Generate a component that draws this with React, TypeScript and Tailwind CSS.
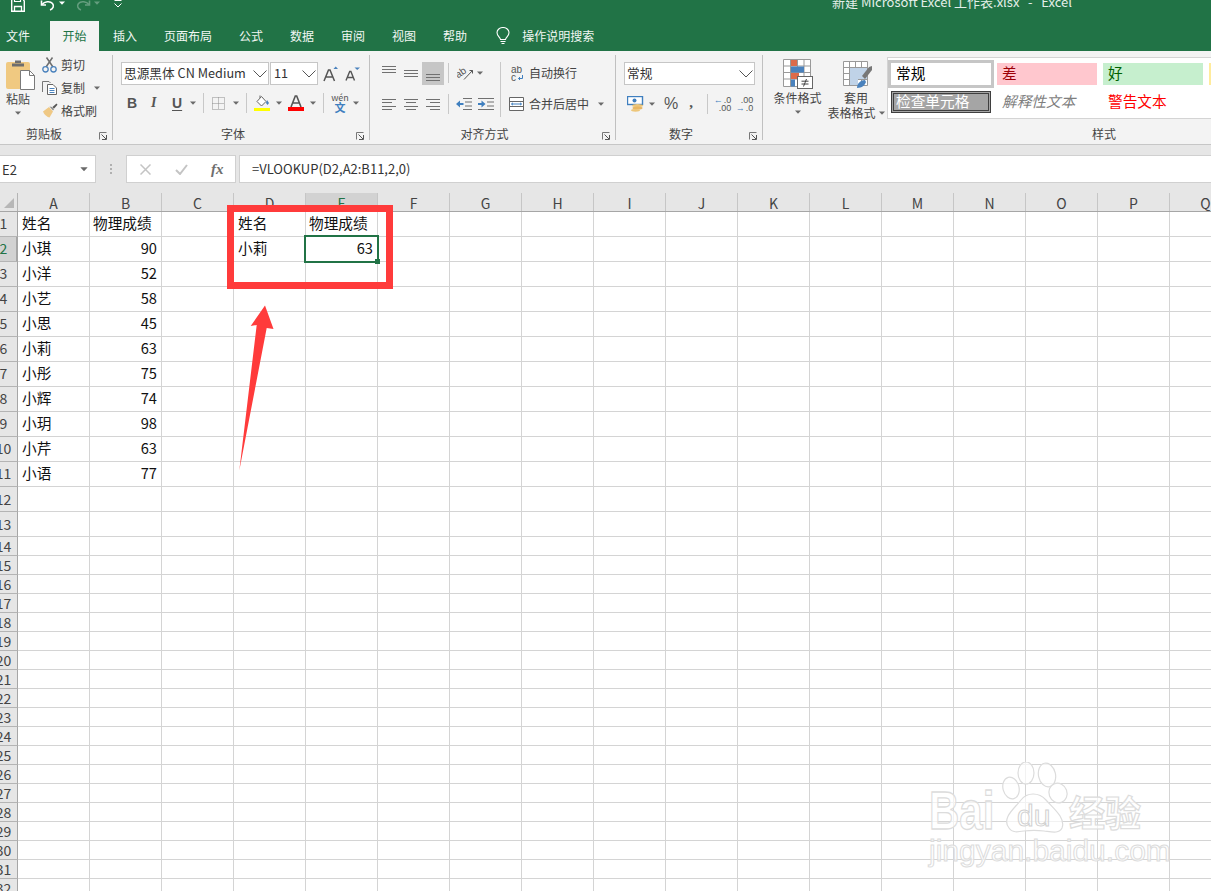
import React from "react";

type SP = { w: number; h: number; className?: string; children?: React.ReactNode };
const Svg = ({ w, h, className = "", children }: SP) => (
  <svg width={w} height={h} viewBox={`0 0 ${w} ${h}`} fill="none" className={`block shrink-0 ${className}`}>
    {children}
  </svg>
);

const Caret = ({ className = "" }: { className?: string }) => (
  <Svg w={6} h={4} className={className}>
    <path d="M0 0.5h6L3 3.8z" fill="#6a6a6a" />
  </Svg>
);

const Chevron = () => (
  <Svg w={14} h={8}>
    <path d="M0.5 0.5L7 7l6.5-6.5" stroke="#555" strokeWidth="1" />
  </Svg>
);

const Launcher = () => (
  <Svg w={8} h={8}>
    <path d="M0.5 7.5V0.5H7.5" stroke="#777" />
    <path d="M7.5 3v4.5H3M2.5 2.5L7 7" stroke="#555" />
  </Svg>
);

const Lines = ({ w, rows }: { w: number; rows: [number, number, number][] }) => {
  const h = Math.max(...rows.map((r) => r[2])) + 1;
  return (
    <Svg w={w} h={h}>
      {rows.map((r, i) => (
        <path key={i} d={`M${r[0]} ${r[2] + 0.5}H${r[1]}`} stroke="#707070" />
      ))}
    </Svg>
  );
};

const Sep = ({ className = "" }: { className?: string }) => <div className={`w-px bg-[#c8c8c8] shrink-0 ${className}`} />;

const GroupSep = () => <div className="w-px h-[85px] mt-[4px] bg-[#c0c0c0] shrink-0" />;

const GroupLabel = ({ label, inset = "" }: { label: string; inset?: string }) => (
  <div className="flex items-center h-[16px]">
    <div className={`flex-1 text-center text-[12px] leading-[16px] text-[#444] ${inset}`}>{label}</div>
    <div className="w-[16px] pl-[3px] pt-[3px]">
      <Launcher />
    </div>
  </div>
);

const SmallItem = ({ icon, text, caret }: { icon: React.ReactNode; text: string; caret?: boolean }) => (
  <div className="flex items-center h-[23px]">
    <div className="w-[19px] flex justify-start">{icon}</div>
    <span className="text-[12px] text-[#444] leading-[16px]">{text}</span>
    {caret && <Caret className="ml-[9px]" />}
  </div>
);

const Select = ({ text, className }: { text: string; className: string }) => (
  <div className={`h-[23px] bg-white border border-[#c6c6c6] flex items-center justify-between pl-[2px] pr-[1px] ${className}`}>
    <span className="text-[12.7px] leading-[16px] text-[#333] whitespace-nowrap pb-[2px]">{text}</span>
    <Chevron />
  </div>
);

const cols = ["A", "B", "C", "D", "E", "F", "G", "H", "I", "J", "K", "L", "M", "N", "O", "P", "Q"];
const names = ["姓名", "小琪", "小洋", "小艺", "小思", "小莉", "小彤", "小辉", "小玥", "小芹", "小语"];
const scores = ["物理成绩", "90", "52", "58", "45", "63", "75", "74", "98", "63", "77"];
const rowNums = Array.from({ length: 33 }, (_, i) => i + 1);

const Cell = ({ text, right, selected }: { text?: string; right?: boolean; selected?: boolean }) => (
  <div
    className={`relative w-[72px] shrink-0 border-r border-b border-[#d4d4d4] h-full flex items-center pb-[2px] pr-[4px] text-[14.67px] text-[#111] whitespace-nowrap ${
      right ? "justify-end" : ""
    } ${text === "物理成绩" ? "pl-[3px]" : "pl-[4px]"} ${selected ? "z-10" : ""}`}
  >
    {text}
    {selected && (
      <>
        <div className="absolute -left-[2px] -top-[2px] w-[75px] h-[28px] border-2 border-[#217346]" />
        <div className="absolute left-[69px] top-[22px] w-[5px] h-[5px] bg-[#217346]" />
      </>
    )}
  </div>
);

export default function App() {
  return (
    <div className="relative w-[1211px] h-[891px] overflow-hidden bg-white font-['Noto_Sans_CJK_SC','Noto_Sans',sans-serif]">
      {/* Title bar */}
      <div className="h-[51px] bg-[#217346] text-white">
        <div className="h-[21px] flex items-start overflow-hidden">
          <Svg w={14} h={12} className="ml-[11px]">
            <path d="M0.7 0V11.3H13.3V1L12.3 0" stroke="#fff" strokeWidth="1.4" />
            <path d="M3.5 11V6.5h7V11" stroke="#fff" strokeWidth="1.3" />
            <path d="M3.5 0v1.5h6V0" stroke="#fff" strokeWidth="1.2" />
          </Svg>
          <Svg w={15} h={11} className="ml-[15px]">
            <path d="M1.5 0.5V5h4.5" stroke="#fff" strokeWidth="1.6" />
            <path d="M2 4.5C4.5 1.5 10 0.5 12.5 3.5c2 2.5 0.5 5.5-2.5 6.5" stroke="#fff" strokeWidth="1.6" />
          </Svg>
          <Svg w={6} h={4} className="ml-[4px] mt-[1px]">
            <path d="M0 0.5h6L3 3.8z" fill="#fff" />
          </Svg>
          <Svg w={15} h={11} className="ml-[11px] opacity-30">
            <path d="M13.5 0.5V5H9" stroke="#fff" strokeWidth="1.6" />
            <path d="M13 4.5C10.5 1.5 5 0.5 2.5 3.5c-2 2.5-0.5 5.5 2.5 6.5" stroke="#fff" strokeWidth="1.6" />
          </Svg>
          <Svg w={6} h={4} className="ml-[3px] mt-[1px] opacity-30">
            <path d="M0 0.5h6L3 3.8z" fill="#fff" />
          </Svg>
          <Svg w={8} h={8} className="ml-[14px]">
            <path d="M0.5 0.5h7" stroke="#fff" />
            <path d="M0.5 3.5L4 7l3.5-3.5" stroke="#fff" />
          </Svg>
          <div className="ml-[710px] -mt-[6px] text-[13px] leading-[16px] text-[#e4efe9] whitespace-pre">
            新建 Microsoft Excel 工作表.xlsx   -   Excel
          </div>
        </div>
        <div className="h-[30px] flex items-center text-[12px] leading-[16px] text-[#f2f7f4]">
          <span className="ml-[6px]">文件</span>
          <div className="ml-[20px] w-[49px] h-full bg-[#f3f3f3] text-[#217346] flex items-center justify-center">开始</div>
          <span className="ml-[14px]">插入</span>
          <span className="ml-[27px]">页面布局</span>
          <span className="ml-[27px]">公式</span>
          <span className="ml-[27px]">数据</span>
          <span className="ml-[27px]">审阅</span>
          <span className="ml-[27px]">视图</span>
          <span className="ml-[27px]">帮助</span>
          <Svg w={14} h={18} className="ml-[29px]">
            <path d="M4.5 12.5C4 10 1 9 1 5.5a6 5 0 0 1 12 0C13 9 10 10 9.5 12.5z" stroke="#fff" strokeWidth="1.1" />
            <path d="M4.5 14.5h5M5.5 16.5h3" stroke="#fff" />
          </Svg>
          <span className="ml-[12px]">操作说明搜索</span>
        </div>
      </div>

      {/* Ribbon */}
      <div className="h-[94px] bg-[#f3f3f3] border-b border-[#c6c6c6] flex">
        {/* Clipboard */}
        <div className="w-[112px] shrink-0 flex flex-col">
          <div className="h-[75px] flex">
            <div className="w-[42px] shrink-0 flex flex-col items-center pr-[6px] pt-[8px]">
              <Svg w={29} h={31} className="ml-[5px]">
                <rect x="0" y="3" width="24" height="27" rx="2" fill="#f0c981" />
                <path d="M6 4.5h12V7.5H6zM9 4V1.5h6V4" fill="#6e6e6e" />
                <path d="M14.5 11.5h9l5 5v14h-14z" fill="#fff" stroke="#7a7a7a" />
                <path d="M23.5 11.5v5h5" stroke="#7a7a7a" />
              </Svg>
              <span className="text-[12px] leading-[15px] text-[#444] mt-[1px]">粘贴</span>
              <Caret className="mt-[5px]" />
            </div>
            <div className="pt-[2px]">
              <SmallItem
                text="剪切"
                icon={
                  <Svg w={15} h={16}>
                    <path d="M4 10L10.5 0.5M11 10L4.5 0.5" stroke="#6e6e6e" strokeWidth="1.5" />
                    <circle cx="3.5" cy="12.3" r="2.7" stroke="#4a82bd" strokeWidth="1.3" />
                    <circle cx="11.5" cy="12.3" r="2.7" stroke="#4a82bd" strokeWidth="1.3" />
                  </Svg>
                }
              />
              <SmallItem
                text="复制"
                caret
                icon={
                  <Svg w={15} h={14}>
                    <path d="M0.5 11V0.5H7L8.5 2" stroke="#777" />
                    <path d="M5.5 3.5H11L14.5 7V13.5H5.5z" fill="#fff" stroke="#666" />
                    <path d="M7.5 7.5h5M7.5 9.5h5M7.5 11.5h5" stroke="#4a82bd" />
                  </Svg>
                }
              />
              <SmallItem
                text="格式刷"
                icon={
                  <Svg w={16} h={15}>
                    <path d="M1 8.5L7 4l4 4.5-3.5 6c-2-.2-5.5-3-6.5-6z" fill="#efc884" />
                    <path d="M7.5 3.5l3.5 4 1-1L10 4z" fill="#8a8a8a" />
                    <path d="M10.5 4L14.5 0.5l1 1.2-3.6 4z" fill="#555" />
                  </Svg>
                }
              />
            </div>
          </div>
          <GroupLabel label="剪贴板" inset="pr-[8px]" />
        </div>
        <GroupSep />

        {/* Font */}
        <div className="w-[256px] shrink-0 flex flex-col">
          <div className="h-[75px] pt-[11px]">
            <div className="flex items-center h-[23px]">
              <Select text="思源黑体 CN Medium" className="ml-[8px] w-[148px]" />
              <Select text="11" className="ml-[1px] w-[48px] !pl-[3px]" />
              <Svg w={15} h={16} className="ml-[5px]">
                <path d="M1 15L5.5 4h1.5L11.5 15M3 11h7" stroke="#555" strokeWidth="1.5" />
                <path d="M10.5 3L12.7 0.5 15 3z" fill="#4a82bd" />
              </Svg>
              <Svg w={15} h={14} className="ml-[7px]">
                <path d="M1 13.5L4.7 4.5h1.2L9.5 13.5M2.8 10.5h6" stroke="#555" strokeWidth="1.4" />
                <path d="M9.5 0.5h5.5L12.2 3z" fill="#4a82bd" />
              </Svg>
            </div>
            <div className="flex items-center h-[22px] mt-[7px]">
              <span className="ml-[14px] w-[9px] text-[14px] font-bold text-[#555] leading-none font-['Liberation_Sans',sans-serif]">B</span>
              <span className="ml-[15px] w-[6px] text-[14px] italic text-[#555] font-bold leading-none font-['Liberation_Serif',serif]">I</span>
              <span className="ml-[15px] w-[9px] text-[14px] font-bold text-[#555] leading-none underline underline-offset-2 font-['Liberation_Sans',sans-serif]">U</span>
              <Caret className="ml-[9px]" />
              <Sep className="ml-[7px] h-[20px]" />
              <Svg w={13} h={13} className="ml-[8px]">
                <path d="M0.5 0.5H12.5V12.5H0.5zM6.5 0.5V12.5M0.5 6.5H12.5" stroke="#8c8c8c" strokeDasharray="1 1" />
              </Svg>
              <Caret className="ml-[8px]" />
              <Sep className="ml-[7px] h-[20px]" />
              <div className="ml-[7px] w-[16px] flex flex-col items-center">
                <Svg w={16} h={12}>
                  <path d="M3 6.5L7.5 1.5l4.5 5-4.5 4.5z" stroke="#666" fill="#fff" />
                  <path d="M6 3V0.5" stroke="#666" />
                  <path d="M13 5l2 3-1.5 2-1.5-2z" fill="#4a82bd" />
                </Svg>
                <div className="w-[16px] h-[3px] bg-[#ffff00] mt-[1px]" />
              </div>
              <Caret className="ml-[6px]" />
              <div className="ml-[6px] w-[16px] flex flex-col items-center">
                <Svg w={12} h={12}>
                  <path d="M1 12L5.3 1h1.4L11 12M2.8 8h6.4" stroke="#555" strokeWidth="1.6" />
                </Svg>
                <div className="w-[16px] h-[4px] bg-[#ff0000]" />
              </div>
              <Caret className="ml-[6px]" />
              <Sep className="ml-[7px] h-[20px]" />
              <div className="ml-[8px] w-[16px] flex flex-col items-center leading-none">
                <span className="text-[9px] leading-[9px] text-[#555] whitespace-nowrap">wén</span>
                <span className="text-[11px] leading-[11px] font-bold text-[#3f7fbf]">文</span>
              </div>
              <Caret className="ml-[5px]" />
            </div>
          </div>
          <GroupLabel label="字体" />
        </div>
        <GroupSep />

        {/* Alignment */}
        <div className="w-[245px] shrink-0 flex flex-col">
          <div className="h-[75px] flex pt-[10px]">
            <div className="w-[130px] shrink-0">
              <div className="flex items-center h-[24px]">
                <div className="ml-[12px] -mt-[7px]">
                  <Lines w={14} rows={[[0, 14, 0], [0, 14, 3], [0, 14, 6]]} />
                </div>
                <div className="ml-[8px] mt-[1px]">
                  <Lines w={14} rows={[[0, 14, 0], [0, 14, 3], [0, 14, 6]]} />
                </div>
                <div className="ml-[4px] w-[22px] h-[23px] bg-[#c6c6c6] flex justify-center items-end pb-[4px]">
                  <Lines w={14} rows={[[0, 14, 0], [0, 14, 3], [0, 14, 6]]} />
                </div>
                <Sep className="ml-[4px] h-[20px]" />
                <Svg w={16} h={14} className="ml-[8px]">
                  <text x="-1" y="10" fontSize="10" fontFamily="Liberation Sans" fill="#555" transform="rotate(-35 4 8)">ab</text>
                  <path d="M7 13.5L15.5 4.5M12.5 4.5H15.5V7.5" stroke="#555" />
                </Svg>
                <Caret className="ml-[4px]" />
              </div>
              <div className="flex items-center h-[22px] mt-[8px]">
                <div className="ml-[12px]">
                  <Lines w={14} rows={[[0, 14, 0], [0, 10, 3], [0, 14, 7], [0, 10, 10]]} />
                </div>
                <div className="ml-[8px]">
                  <Lines w={14} rows={[[0, 14, 0], [2, 12, 3], [0, 14, 7], [2, 12, 10]]} />
                </div>
                <div className="ml-[8px]">
                  <Lines w={14} rows={[[0, 14, 0], [4, 14, 3], [0, 14, 7], [4, 14, 10]]} />
                </div>
                <Sep className="ml-[8px] h-[20px]" />
                <Svg w={16} h={12} className="ml-[7px]">
                  <path d="M7 0.5H16M9 4H16M9 8H16M7 11.5H16" stroke="#707070" />
                  <path d="M0 6L4 2.5V5H7.5V7H4V9.5z" fill="#3f7fbf" />
                </Svg>
                <Svg w={16} h={12} className="ml-[6px]">
                  <path d="M0 0.5H16M9 4H16M9 8H16M0 11.5H16" stroke="#707070" />
                  <path d="M7.5 6L3.5 2.5V5H0V7H3.5V9.5z" fill="#3f7fbf" />
                </Svg>
              </div>
            </div>
            <Sep className="mt-[1px] h-[55px]" />
            <div className="pl-[9px]">
              <div className="flex items-center h-[24px]">
                <Svg w={14} h={15}>
                  <text x="1" y="7" fontSize="10" fontFamily="Liberation Sans" fill="#555">ab</text>
                  <text x="1" y="14.5" fontSize="10" fontFamily="Liberation Sans" fill="#555">c</text>
                  <path d="M12.5 9v3.5H8.5M10 11l-1.5 1.5L10 14" stroke="#3f7fbf" />
                </Svg>
                <span className="ml-[5px] text-[12px] leading-[16px] text-[#444]">自动换行</span>
              </div>
              <div className="flex items-center h-[22px] mt-[8px] -ml-[1px]">
                <Svg w={15} h={14}>
                  <path d="M0.5 0.5H14.5V13.5H0.5zM0.5 4.5H14.5M0.5 9.5H14.5" stroke="#666" fill="#fff" />
                  <rect x="1" y="5" width="13" height="4" fill="#fff" />
                  <path d="M2.5 7h10M2.5 7l1.5-1.2M2.5 7l1.5 1.2M12.5 7L11 5.8M12.5 7L11 8.2" stroke="#3f7fbf" />
                </Svg>
                <span className="ml-[5px] text-[12px] leading-[16px] text-[#444]">合并后居中</span>
                <Caret className="ml-[9px]" />
              </div>
            </div>
          </div>
          <GroupLabel label="对齐方式" />
        </div>
        <GroupSep />

        {/* Number */}
        <div className="w-[146px] shrink-0 flex flex-col">
          <div className="h-[75px] pt-[11px]">
            <Select text="常规" className="ml-[8px] w-[131px]" />
            <div className="flex items-center h-[22px] mt-[8px]">
              <Svg w={17} h={16} className="ml-[11px]">
                <rect x="0.5" y="0.5" width="15" height="8" fill="#fff" stroke="#3f7fbf" strokeWidth="1.4" />
                <circle cx="7.5" cy="4.5" r="2" fill="#3f7fbf" />
                <ellipse cx="10.5" cy="9.5" rx="5.5" ry="1.6" fill="#edc67a" />
                <ellipse cx="10.5" cy="12" rx="5" ry="1.5" fill="#e8b765" />
                <ellipse cx="8.5" cy="14.3" rx="4.5" ry="1.4" fill="#edc67a" />
              </Svg>
              <Caret className="ml-[5px]" />
              <span className="ml-[9px] text-[16px] leading-none text-[#555] font-['Liberation_Sans',sans-serif]">%</span>
              <span className="ml-[11px] w-[5px] text-[15px] font-bold leading-none text-[#555] -mt-[4px] font-['Liberation_Serif',serif]">,</span>
              <Sep className="ml-[13px] h-[20px]" />
              <div className="ml-[7px] w-[16px] text-[9px] leading-[8px] text-[#555] font-['Liberation_Sans',sans-serif]">
                <div className="flex justify-end items-center">
                  <span className="text-[#3f7fbf] text-[9px] mr-[1px]">←</span>.0
                </div>
                <div className="text-right">.00</div>
              </div>
              <div className="ml-[6px] w-[16px] text-[9px] leading-[8px] text-[#555] font-['Liberation_Sans',sans-serif]">
                <div className="text-right">.00</div>
                <div className="flex justify-end items-center">
                  <span className="text-[#3f7fbf] text-[9px] mr-[1px]">→</span>.0
                </div>
              </div>
            </div>
          </div>
          <GroupLabel label="数字" />
        </div>
        <GroupSep />

        {/* Styles */}
        <div className="flex-1 min-w-0 flex flex-col">
          <div className="h-[75px] flex">
            <div className="w-[124px] shrink-0 flex">
              <div className="w-[68px] shrink-0 flex flex-col items-center pt-[8px] pl-[1px]">
                <Svg w={30} h={30}>
                  <path d="M0.5 0.5H27.5V27.5H0.5zM0.5 7H27.5M0.5 13.5H27.5M0.5 20H27.5M7.5 0.5V27.5M14.5 0.5V27.5M21 0.5V27.5" stroke="#999" fill="#fff" />
                  <rect x="8" y="1" width="6" height="6" fill="#dd6b4a" />
                  <rect x="8" y="7.5" width="13" height="6" fill="#4a82bd" />
                  <rect x="8" y="14" width="8" height="6" fill="#dd6b4a" />
                  <rect x="8" y="20.5" width="4" height="7" fill="#4a82bd" />
                  <rect x="14.5" y="17.5" width="15" height="12" fill="#fff" stroke="#666" />
                  <path d="M18.5 22.2h7M18.5 25h7M23.5 20l-3 7.5" stroke="#444" />
                </Svg>
                <span className="text-[12px] leading-[15px] text-[#444] mt-[1px] whitespace-nowrap">条件格式</span>
                <Caret className="mt-[5px]" />
              </div>
              <div className="w-[56px] shrink-0 flex flex-col items-center pt-[10px] -ml-[3px]">
                <Svg w={29} h={28} className="ml-[2px]">
                  <path d="M0.5 0.5H24.5V24.5H0.5zM0.5 6.5H24.5M0.5 12.5H24.5M0.5 18.5H24.5M6.5 0.5V24.5M12.5 0.5V24.5M18.5 0.5V24.5" stroke="#999" fill="#fff" />
                  <rect x="7" y="7" width="17" height="11" fill="#c0d3e8" />
                  <rect x="7" y="18" width="8" height="6" fill="#c0d3e8" />
                  <path d="M19 15l7-9 3-1v4l-7 9z" fill="#777" />
                  <path d="M14 27c0-5 4-8 8-8l1 2c-1 3-4 6-9 6z" fill="#4a82bd" />
                </Svg>
                <span className="text-[12px] leading-[15px] text-[#444] mt-[1px] whitespace-nowrap">套用</span>
                <div className="flex items-center whitespace-nowrap">
                  <span className="text-[12px] leading-[15px] text-[#444]">表格格式</span>
                  <Caret className="ml-[3px]" />
                </div>
              </div>
            </div>
            <div className="flex-1 min-w-0 mt-[6px] h-[62px] bg-white border border-r-0 border-[#d4d4d4] pt-[5px] pl-[3px] overflow-hidden">
              <div className="grid grid-cols-[100px_100px_100px_100px] gap-x-[6px] gap-y-[6px] auto-rows-[22px] text-[14.67px] leading-[19px] whitespace-nowrap">
                <div className="bg-white text-black pl-[5px] shadow-[0_0_0_3px_#c6c6c6]">常规</div>
                <div className="bg-[#ffc7ce] text-[#9c0006] pl-[5px]">差</div>
                <div className="bg-[#c6efce] text-[#006100] pl-[5px]">好</div>
                <div className="bg-[#ffeb9c] text-[#9c5700] pl-[5px]">适中</div>
                <div className="bg-[#a5a5a5] text-white pl-[2px] border-[3px] border-double border-[#3f3f3f] leading-[14px]">检查单元格</div>
                <div className="italic text-[#7f7f7f] pl-[5px]">解释性文本</div>
                <div className="text-[#ff0000] pl-[5px]">警告文本</div>
                <div className="text-[#fa7d00] pl-[5px] underline">链接单元格</div>
              </div>
            </div>
          </div>
          <div className="text-center text-[12px] leading-[16px] text-[#444] pl-[236px] pr-[2px]">样式</div>
        </div>
      </div>

      {/* Formula bar */}
      <div className="h-[48px] bg-[#e6e6e6] flex items-start pt-[10px]">
        <div className="w-[96px] h-[28px] bg-white border border-[#d0d0d0] border-l-0 flex items-center justify-between pl-[2px] pr-[8px] shrink-0">
          <span className="text-[13px] text-[#333] leading-none">E2</span>
          <Caret className="scale-125" />
        </div>
        <div className="w-[30px] h-[28px] flex flex-col items-center justify-center gap-[2px] shrink-0">
          <div className="w-[2px] h-[2px] bg-[#b0b0b0]" />
          <div className="w-[2px] h-[2px] bg-[#b0b0b0]" />
          <div className="w-[2px] h-[2px] bg-[#b0b0b0]" />
        </div>
        <div className="w-[110px] h-[28px] bg-white border border-[#d0d0d0] flex items-center shrink-0">
          <Svg w={11} h={11} className="ml-[13px]">
            <path d="M0.5 0.5L10.5 10.5M10.5 0.5L0.5 10.5" stroke="#c4c4c4" strokeWidth="1.5" />
          </Svg>
          <Svg w={13} h={11} className="ml-[24px]">
            <path d="M1 6L5 10L12 1" stroke="#c4c4c4" strokeWidth="2" />
          </Svg>
          <span className="ml-[23px] italic font-bold text-[15px] text-[#6e6e6e] font-['Liberation_Serif',serif] leading-none">fx</span>
        </div>
        <div className="ml-[3px] flex-1 h-[28px] bg-white border border-r-0 border-[#d0d0d0] flex items-center pl-[12px] text-[13px] text-[#333] whitespace-nowrap">
          =VLOOKUP(D2,A2:B11,2,0)
        </div>
      </div>

      {/* Sheet */}
      <div className="flex h-[19px] bg-[#e6e6e6] border-b border-[#a6a6a6] overflow-hidden">
        <div className="w-[18px] shrink-0 border-r border-[#b4b4b4] flex items-end justify-end pb-[3px] pr-[3px]">
          <Svg w={10} h={10}>
            <path d="M10 0V10H0z" fill="#b7b7b7" />
          </Svg>
        </div>
        {cols.map((c) => (
          <div
            key={c}
            className={`w-[72px] shrink-0 border-r border-[#c6c6c6] text-center text-[14px] leading-[21px] ${
              c === "E" ? "bg-[#d2d2d2] text-[#217346]" : "text-[#444]"
            }`}
          >
            {c}
          </div>
        ))}
      </div>
      {rowNums.map((n) => {
        const h = n <= 13 ? "h-[25px]" : "h-[19px]";
        return (
          <div key={n} className={`flex ${h}`}>
            <div
              className={`w-[18px] shrink-0 overflow-hidden border-r border-b border-r-[#a6a6a6] border-b-[#b4b4b4] ${
                n === 2 ? "bg-[#d2d2d2] border-r-2 border-r-[#217346]" : "bg-[#e6e6e6]"
              }`}
            >
              <div
                className={`-ml-[10px] w-[27px] text-center text-[14px] h-full flex items-center justify-center ${
                  n <= 11 ? "pb-[2px]" : ""
                } ${n === 2 ? "text-[#217346]" : "text-[#444]"}`}
              >
                {n}
              </div>
            </div>
            {cols.map((c) => {
              let text: string | undefined;
              let right = false;
              if (n <= 11 && c === "A") text = names[n - 1];
              if (n <= 11 && c === "B") {
                text = scores[n - 1];
                right = n > 1;
              }
              if (n === 1 && c === "D") text = "姓名";
              if (n === 1 && c === "E") text = "物理成绩";
              if (n === 2 && c === "D") text = "小莉";
              if (n === 2 && c === "E") {
                text = "63";
                right = true;
              }
              return <Cell key={c} text={text} right={right} selected={n === 2 && c === "E"} />;
            })}
          </div>
        );
      })}

      {/* Annotation: red rectangle + arrow */}
      <div className="absolute z-20 left-[227px] top-[205px] w-[166px] h-[84px] border-[7px] border-[#ff3b3b]" />
      <svg className="absolute z-20 left-0 top-0 pointer-events-none" width="1211" height="891" viewBox="0 0 1211 891">
        <polygon points="265,305.5 273.5,329 266.7,328 239.3,470.5 256.7,325 250.7,326" fill="#ff3b3b" />
      </svg>

      {/* Watermark */}
      <div className="absolute z-20 left-[929px] top-[762px] w-[220px] h-[105px] text-white/70 pointer-events-none">
        <svg className="absolute left-0 top-0" width="220" height="80" viewBox="0 0 220 80" fill="rgba(255,255,255,0.7)" stroke="#dcdcdc" strokeWidth="1.2">
          <ellipse cx="82" cy="26" rx="8" ry="11" transform="rotate(-15 82 26)" />
          <ellipse cx="97" cy="11" rx="8" ry="11" />
          <ellipse cx="118" cy="13" rx="8.5" ry="12" transform="rotate(-12 118 13)" />
          <ellipse cx="129" cy="31" rx="9" ry="10" transform="rotate(-20 129 31)" />
          <path d="M80 66C72 56 86 46 92 38c6-8 18-8 25 0 7 8 20 18 16 28-3 6-10 4-18 3-8-1-12-1-20 0-6 1-12 2-15-3z" />
        </svg>
        <div className="absolute left-0 top-[23px] text-[42px] leading-[60px] font-bold font-['Liberation_Sans',sans-serif] scale-y-[1.27] origin-[0_45px] [-webkit-text-stroke:1px_#dcdcdc]">
          Bai
        </div>
        <div className="absolute left-[88px] top-[38px] text-[30px] leading-[32px] font-['Liberation_Sans',sans-serif] text-transparent [-webkit-text-stroke:1px_#d0d0d0]">
          du
        </div>
        <div className="absolute left-[140px] top-[27px] text-[36px] leading-[44px] font-bold whitespace-nowrap [-webkit-text-stroke:1.2px_#dcdcdc]">
          经验
        </div>
        <div className="absolute left-0 top-[72px] text-[30px] leading-[34px] whitespace-nowrap font-['Liberation_Sans',sans-serif] [-webkit-text-stroke:1px_#dcdcdc]">
          jingyan.baidu.com
        </div>
      </div>
    </div>
  );
}
